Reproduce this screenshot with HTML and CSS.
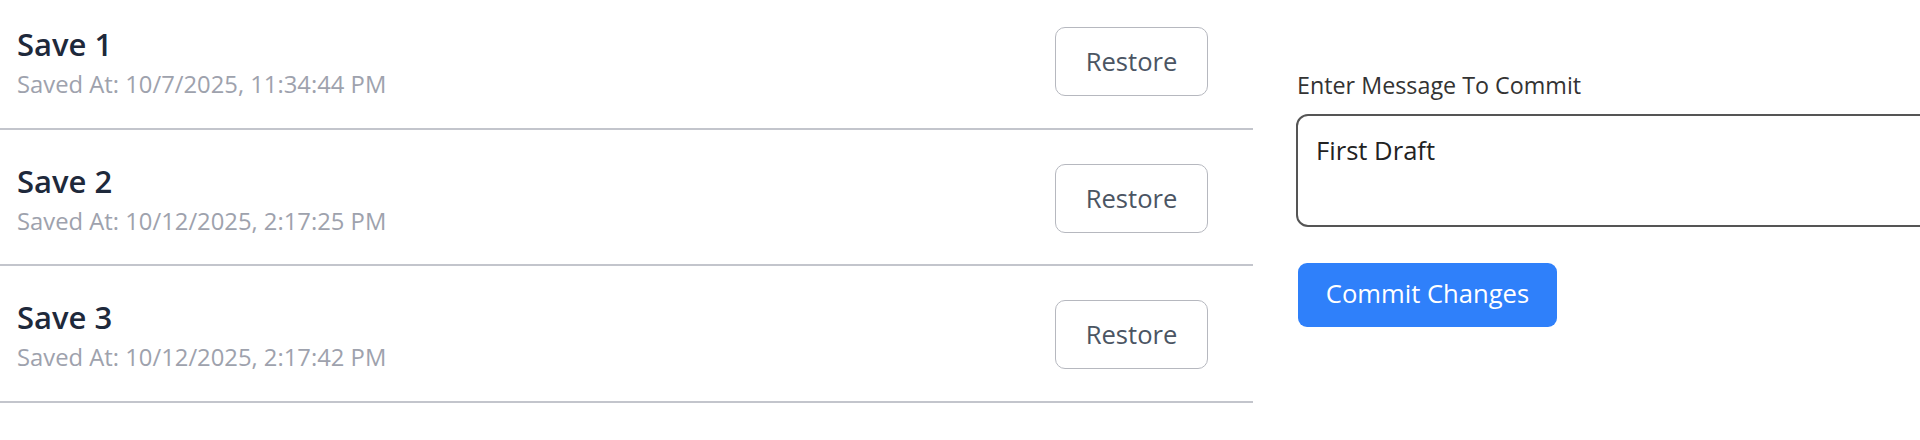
FILE: index.html
```html
<!DOCTYPE html>
<html lang="en">
<head>
<meta charset="utf-8">
<title>Saves</title>
<link rel="stylesheet" href="styles.css">
</head>
<body>
<div class="page">
  <div class="saves">
    <div class="save-row first">
      <div class="save-info">
        <div class="save-title">Save 1</div>
        <div class="save-time">Saved At: 10/7/2025, 11:34:44 PM</div>
      </div>
      <button class="restore-btn">Restore</button>
    </div>
    <div class="save-row">
      <div class="save-info">
        <div class="save-title">Save 2</div>
        <div class="save-time">Saved At: 10/12/2025, 2:17:25 PM</div>
      </div>
      <button class="restore-btn">Restore</button>
    </div>
    <div class="save-row">
      <div class="save-info">
        <div class="save-title">Save 3</div>
        <div class="save-time">Saved At: 10/12/2025, 2:17:42 PM</div>
      </div>
      <button class="restore-btn">Restore</button>
    </div>
  </div>
  <div class="commit-panel">
    <label class="commit-label" for="msg">Enter Message To Commit</label>
    <textarea id="msg" class="commit-input">First Draft</textarea>
    <button class="commit-btn">Commit Changes</button>
  </div>
</div>
</body>
</html>
```

FILE: styles.css
```css
html, body {
  margin: 0;
  padding: 0;
  background: #ffffff;
  overflow: hidden;
}

body {
  font-family: "Open Sans", "Liberation Sans", sans-serif;
  width: 1920px;
  height: 440px;
}

.page {
  display: grid;
  grid-template-columns: 1253px 1fr;
  align-items: start;
}

.saves {
  display: flex;
  flex-direction: column;
}

.save-row {
  display: flex;
  align-items: center;
  justify-content: space-between;
  padding: 30px 45px 27.5px 17px;
  border-bottom: 2px solid #c3c5cc;
}

.save-row.first {
  margin-top: -7px;
}

.save-info {
  display: flex;
  flex-direction: column;
  gap: 3px;
}

.save-title {
  font-size: 31px;
  font-weight: 600;
  color: #1e293b;
}

.save-time {
  font-size: 23.8px;
  color: #9ea2ad;
}

.restore-btn {
  font-family: inherit;
  font-size: 25.6px;
  color: #4b5563;
  background: #ffffff;
  border: 1.5px solid #b6b8bf;
  border-radius: 10px;
  width: 153px;
  height: 69px;
  padding: 0;
}

.commit-panel {
  display: flex;
  flex-direction: column;
  align-items: flex-start;
  padding: 69px 0 0 43px;
}

.commit-label {
  font-size: 23.3px;
  color: #333333;
  margin-left: 1px;
}

.commit-input {
  margin-top: 13px;
  box-sizing: border-box;
  width: 700px;
  height: 113px;
  font-family: inherit;
  font-size: 25.6px;
  color: #222222;
  border: 2px solid #555555;
  border-radius: 12px;
  padding: 17px 18px;
  resize: none;
  outline: none;
}

.commit-btn {
  margin-top: 36px;
  margin-left: 2px;
  font-family: inherit;
  font-size: 25.6px;
  color: #ffffff;
  background: #2f80fa;
  border: none;
  border-radius: 9px;
  width: 259px;
  height: 64px;
  padding: 0 0 3px;
}
```
